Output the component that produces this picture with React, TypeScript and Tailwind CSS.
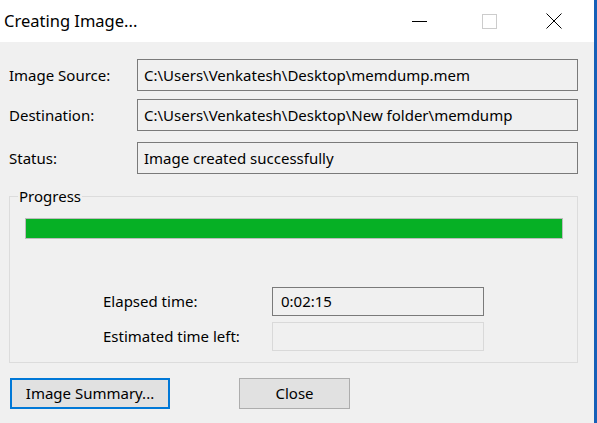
import React from "react";

const font = { fontFamily: '"Noto Sans", "Open Sans", sans-serif' };

function TextBox({ value, className }: { value: string; className: string }) {
  return (
    <div className={`flex items-center border border-[#7a7a7a] bg-[#f0f0f0] pl-[6px] text-[15px] text-black ${className}`}>
      {value}
    </div>
  );
}

export default function App() {
  return (
    <div className="flex h-[423px] w-[597px] bg-[#1660b8]" style={font}>
      <div className="flex h-full w-[594px] flex-col bg-[#f0f0f0]">
        {/* title bar */}
        <div className="flex h-[42px] items-center bg-white">
          <div className="pl-[4px] text-[16.5px] text-black">Creating Image...</div>
          <div className="ml-auto flex h-full items-center">
            <div className="flex w-[70px] justify-center">
              <div className="h-px w-[15px] bg-black" />
            </div>
            <div className="flex w-[70px] justify-center">
              <div className="h-[15px] w-[15px] border border-[#cccccc]" />
            </div>
            <div className="flex w-[70px] justify-center pr-[10px]">
              <svg width="16" height="16" viewBox="0 0 16 16">
                <path d="M0.5 0.5 L15.5 15.5 M15.5 0.5 L0.5 15.5" stroke="#000" strokeWidth="1" />
              </svg>
            </div>
          </div>
        </div>

        {/* body */}
        <div className="flex flex-1 flex-col pl-[9px] pt-[17px]">
          <div className="flex h-[32px] items-center">
            <div className="w-[128px] text-[15px] text-black">Image Source:</div>
            <TextBox className="h-[32px] w-[441px]" value="C:\Users\Venkatesh\Desktop\memdump.mem" />
          </div>
          <div className="mt-[8px] flex h-[32px] items-center">
            <div className="w-[128px] text-[15px] text-black">Destination:</div>
            <TextBox className="h-[32px] w-[441px]" value="C:\Users\Venkatesh\Desktop\New folder\memdump" />
          </div>
          <div className="mt-[11px] flex h-[32px] items-center">
            <div className="w-[128px] text-[15px] text-black">Status:</div>
            <TextBox className="h-[32px] w-[441px]" value="Image created successfully" />
          </div>

          {/* group box */}
          <div className="relative mt-[22px] flex h-[167px] w-[569px] flex-col border border-[#dcdcdc] pl-[15px] pr-[14px] pt-[21px]">
            <span className="absolute left-[8px] top-[-12px] bg-[#f0f0f0] px-[1px] text-[15px] leading-[22px] text-black">
              Progress
            </span>
            <div className="h-[21px] w-full border border-[#bcbcbc] bg-[#06b025]" />
            <div className="mt-[48px] flex h-[29px] items-center">
              <div className="w-[247px] whitespace-nowrap pl-[78px] text-[15px] text-black">Elapsed time:</div>
              <div className="flex h-[29px] w-[212px] items-center border border-[#7a7a7a] pl-[8px] text-[15px] text-black">
                0:02:15
              </div>
            </div>
            <div className="mt-[6px] flex h-[29px] items-center">
              <div className="w-[247px] whitespace-nowrap pl-[78px] text-[15px] text-black">Estimated time left:</div>
              <div className="h-[29px] w-[212px] border border-[#d9d9d9]" />
            </div>
          </div>

          {/* buttons */}
          <div className="mt-[15px] flex items-center">
            <button className="ml-[1px] flex h-[31px] w-[160px] items-center justify-center border-2 border-[#0078d7] bg-[#e1e1e1] text-[15px] text-black">
              Image Summary...
            </button>
            <button className="ml-[69px] flex h-[31px] w-[111px] items-center justify-center border border-[#adadad] bg-[#e1e1e1] text-[15px] text-black">
              Close
            </button>
          </div>
        </div>
      </div>
    </div>
  );
}
